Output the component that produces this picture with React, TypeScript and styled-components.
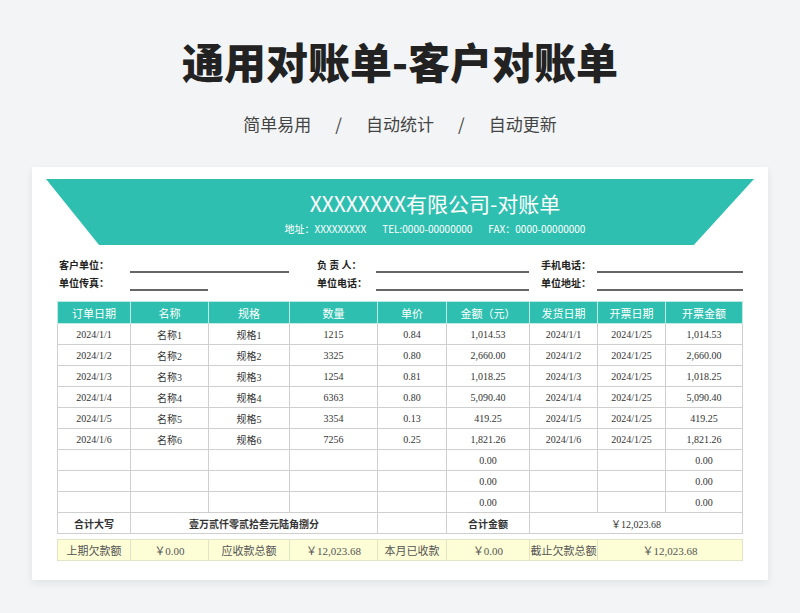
import React from 'react';
import styled, { createGlobalStyle } from 'styled-components';

const GlobalStyle = createGlobalStyle`
  body {
    margin: 0;
    background: #f3f4f6;
    font-family: "Noto Sans CJK SC", "Noto Sans", sans-serif;
  }
`;

const Page = styled.div`
  width: 800px;
  height: 613px;
  display: flex;
  flex-direction: column;
  align-items: center;
  overflow: hidden;
`;
const Title = styled.h1`
  margin: 34px 0 0;
  height: 54px;
  font-size: 42px;
  line-height: 54px;
  font-weight: 900;
  color: #222;
`;
const Subtitle = styled.div`
  margin-top: 24px;
  display: flex;
  gap: 24px;
  font-size: 17px;
  line-height: 24px;
  color: #444;
`;
const Card = styled.div`
  margin-top: 31px;
  width: 736px;
  height: 413px;
  background: #fff;
  box-shadow: 0 3px 8px rgba(0, 0, 0, 0.08);
  display: flex;
  flex-direction: column;
  align-items: center;
  padding-top: 12px;
  box-sizing: border-box;
`;
const Banner = styled.div`
  width: 708px;
  height: 66px;
  background: #2fbfb0;
  clip-path: polygon(0 0, 100% 0, 91.5% 100%, 7.5% 100%);
  color: #fff;
  display: flex;
  flex-direction: column;
  align-items: center;
  padding-left: 70px;
  box-sizing: border-box;
`;
const BannerTitle = styled.div`
  margin-top: 10px;
  font-size: 21px;
  line-height: 28px;
`;
const BannerInfo = styled.div`
  margin-top: 5px;
  display: flex;
  gap: 16px;
  font-size: 10px;
  line-height: 14px;
`;
const InfoGrid = styled.div`
  margin-top: 12px;
  width: 686px;
  display: grid;
  grid-template-columns: 73px 159px 87px 153px 68px 146px;
  row-gap: 2px;
  font-size: 10px;
  font-weight: 700;
  color: #222;
`;
const Label = styled.div<{ $indent?: number }>`
  line-height: 16px;
  padding-left: ${p => p.$indent ?? 2}px;
`;
const Line = styled.div<{ $w?: number }>`
  height: 16px;
  width: ${p => (p.$w ? `${p.$w}px` : '100%')};
  border-bottom: 2px solid #666;
  box-sizing: border-box;
`;
const Table = styled.table`
  margin-top: 10px;
  border-collapse: collapse;
  table-layout: fixed;
  width: 685px;
  font-family: "Liberation Serif", "Noto Sans CJK SC", serif;
  font-size: 10px;
  color: #333;
`;
const Th = styled.th`
  background: #2fbfb0;
  color: #fff;
  font-weight: 400;
  font-family: "Noto Sans CJK SC", sans-serif;
  font-size: 11px;
  height: 21px;
  padding: 0;
  border: 1px solid #bfe9e3;
`;
const Td = styled.td<{ $bold?: boolean }>`
  height: 20px;
  padding: 0;
  text-align: center;
  border: 1px solid #cfcfcf;
  font-weight: ${p => (p.$bold ? 700 : 400)};
  white-space: nowrap;
  overflow: hidden;
`;
const Gap = styled.tr`
  height: 6px;
`;
const YTd = styled.td`
  height: 20px;
  padding: 0;
  text-align: center;
  background: #fdfdd6;
  border: 1px solid #e3e3c8;
  font-size: 11px;
  color: #555;
  white-space: nowrap;
  overflow: hidden;
`;

const widths = [73, 78, 81, 88, 69, 83, 68, 68, 77];
const heads = ['订单日期', '名称', '规格', '数量', '单价', '金额（元）', '发货日期', '开票日期', '开票金额'];
const rows = [
  ['2024/1/1', '名称1', '规格1', '1215', '0.84', '1,014.53', '2024/1/1', '2024/1/25', '1,014.53'],
  ['2024/1/2', '名称2', '规格2', '3325', '0.80', '2,660.00', '2024/1/2', '2024/1/25', '2,660.00'],
  ['2024/1/3', '名称3', '规格3', '1254', '0.81', '1,018.25', '2024/1/3', '2024/1/25', '1,018.25'],
  ['2024/1/4', '名称4', '规格4', '6363', '0.80', '5,090.40', '2024/1/4', '2024/1/25', '5,090.40'],
  ['2024/1/5', '名称5', '规格5', '3354', '0.13', '419.25', '2024/1/5', '2024/1/25', '419.25'],
  ['2024/1/6', '名称6', '规格6', '7256', '0.25', '1,821.26', '2024/1/6', '2024/1/25', '1,821.26'],
  ['', '', '', '', '', '0.00', '', '', '0.00'],
  ['', '', '', '', '', '0.00', '', '', '0.00'],
  ['', '', '', '', '', '0.00', '', '', '0.00'],
];

export default function App() {
  return (
    <Page>
      <GlobalStyle />
      <Title>通用对账单-客户对账单</Title>
      <Subtitle>
        <span>简单易用</span><span>/</span><span>自动统计</span><span>/</span><span>自动更新</span>
      </Subtitle>
      <Card>
        <Banner>
          <BannerTitle>XXXXXXXX有限公司-对账单</BannerTitle>
          <BannerInfo>
            <span>地址：XXXXXXXXX</span>
            <span>TEL:0000-00000000</span>
            <span>FAX：0000-00000000</span>
          </BannerInfo>
        </Banner>
        <InfoGrid>
          <Label>客户单位：</Label><Line />
          <Label $indent={28}>负 责 人：</Label><Line />
          <Label $indent={12}>手机电话：</Label><Line />
          <Label>单位传真：</Label><Line $w={78} />
          <Label $indent={28}>单位电话：</Label><Line />
          <Label $indent={12}>单位地址：</Label><Line />
        </InfoGrid>
        <Table>
          <colgroup>
            {widths.map((w, i) => <col key={i} style={{ width: w }} />)}
          </colgroup>
          <thead>
            <tr>{heads.map(h => <Th key={h}>{h}</Th>)}</tr>
          </thead>
          <tbody>
            {rows.map((r, i) => (
              <tr key={i}>{r.map((c, j) => <Td key={j}>{c}</Td>)}</tr>
            ))}
            <tr>
              <Td $bold>合计大写</Td>
              <Td $bold colSpan={3}>壹万贰仟零贰拾叁元陆角捌分</Td>
              <Td />
              <Td $bold>合计金额</Td>
              <Td colSpan={3}>￥12,023.68</Td>
            </tr>
            <Gap />
            <tr>
              <YTd>上期欠款额</YTd>
              <YTd>￥0.00</YTd>
              <YTd>应收款总额</YTd>
              <YTd>￥12,023.68</YTd>
              <YTd>本月已收款</YTd>
              <YTd>￥0.00</YTd>
              <YTd>截止欠款总额</YTd>
              <YTd colSpan={2}>￥12,023.68</YTd>
            </tr>
          </tbody>
        </Table>
      </Card>
    </Page>
  );
}
